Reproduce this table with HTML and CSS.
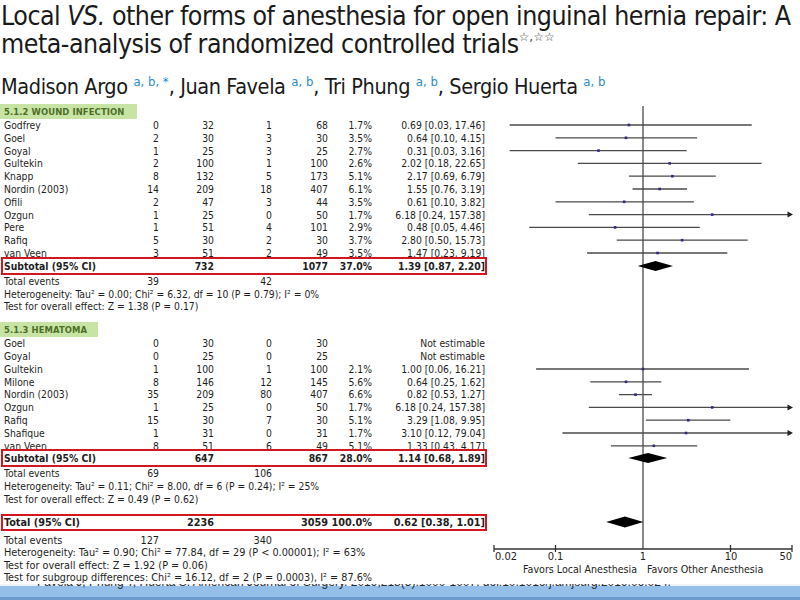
FILE: index.html
```html
<!DOCTYPE html>
<html lang="en">
<head>
<meta charset="utf-8">
<title>Local vs other anesthesia forest plot</title>
<link rel="stylesheet" href="styles.css">
</head>
<body>
<div class="page">
  <header class="head">
    <h1 class="title">
      <span class="tline">Local <i>VS.</i> other forms of anesthesia for open inguinal hernia repair: A</span>
      <span class="tline">meta-analysis of randomized controlled trials<sup class="stars">☆,☆☆</sup></span>
    </h1>
    <p class="authors">Madison Argo <sup class="aff">a, b, *</sup>, Juan Favela <sup class="aff">a, b</sup>, Tri Phung <sup class="aff">a, b</sup>, Sergio Huerta <sup class="aff">a, b</sup></p>
  </header>

  <div class="figure">
    <div class="table">
      <div class="group g1">5.1.2 WOUND INFECTION</div>
      <div class="row"><span class="nm">Godfrey</span><span>0</span><span>32</span><span>1</span><span>68</span><span>1.7%</span><span>0.69 [0.03, 17.46]</span></div>
      <div class="row"><span class="nm">Goel</span><span>2</span><span>30</span><span>3</span><span>30</span><span>3.5%</span><span>0.64 [0.10, 4.15]</span></div>
      <div class="row"><span class="nm">Goyal</span><span>1</span><span>25</span><span>3</span><span>25</span><span>2.7%</span><span>0.31 [0.03, 3.16]</span></div>
      <div class="row"><span class="nm">Gultekin</span><span>2</span><span>100</span><span>1</span><span>100</span><span>2.6%</span><span>2.02 [0.18, 22.65]</span></div>
      <div class="row"><span class="nm">Knapp</span><span>8</span><span>132</span><span>5</span><span>173</span><span>5.1%</span><span>2.17 [0.69, 6.79]</span></div>
      <div class="row"><span class="nm">Nordin (2003)</span><span>14</span><span>209</span><span>18</span><span>407</span><span>6.1%</span><span>1.55 [0.76, 3.19]</span></div>
      <div class="row"><span class="nm">Ofili</span><span>2</span><span>47</span><span>3</span><span>44</span><span>3.5%</span><span>0.61 [0.10, 3.82]</span></div>
      <div class="row"><span class="nm">Ozgun</span><span>1</span><span>25</span><span>0</span><span>50</span><span>1.7%</span><span>6.18 [0.24, 157.38]</span></div>
      <div class="row"><span class="nm">Pere</span><span>1</span><span>51</span><span>4</span><span>101</span><span>2.9%</span><span>0.48 [0.05, 4.46]</span></div>
      <div class="row"><span class="nm">Rafiq</span><span>5</span><span>30</span><span>2</span><span>30</span><span>3.7%</span><span>2.80 [0.50, 15.73]</span></div>
      <div class="row"><span class="nm">van Veen</span><span>3</span><span>51</span><span>2</span><span>49</span><span>3.5%</span><span>1.47 [0.23, 9.19]</span></div>
      <div class="row boxed bold sub1"><span class="nm">Subtotal (95% CI)</span><span></span><span>732</span><span></span><span>1077</span><span>37.0%</span><span>1.39 [0.87, 2.20]</span></div>
      <div class="row"><span class="nm">Total events</span><span>39</span><span></span><span>42</span><span></span><span></span><span></span></div>
      <div class="line">Heterogeneity: Tau² = 0.00; Chi² = 6.32, df = 10 (P = 0.79); I² = 0%</div>
      <div class="line">Test for overall effect: Z = 1.38 (P = 0.17)</div>

      <div class="group g2">5.1.3 HEMATOMA</div>
      <div class="row"><span class="nm">Goel</span><span>0</span><span>30</span><span>0</span><span>30</span><span></span><span>Not estimable</span></div>
      <div class="row"><span class="nm">Goyal</span><span>0</span><span>25</span><span>0</span><span>25</span><span></span><span>Not estimable</span></div>
      <div class="row"><span class="nm">Gultekin</span><span>1</span><span>100</span><span>1</span><span>100</span><span>2.1%</span><span>1.00 [0.06, 16.21]</span></div>
      <div class="row"><span class="nm">Milone</span><span>8</span><span>146</span><span>12</span><span>145</span><span>5.6%</span><span>0.64 [0.25, 1.62]</span></div>
      <div class="row"><span class="nm">Nordin (2003)</span><span>35</span><span>209</span><span>80</span><span>407</span><span>6.6%</span><span>0.82 [0.53, 1.27]</span></div>
      <div class="row"><span class="nm">Ozgun</span><span>1</span><span>25</span><span>0</span><span>50</span><span>1.7%</span><span>6.18 [0.24, 157.38]</span></div>
      <div class="row"><span class="nm">Rafiq</span><span>15</span><span>30</span><span>7</span><span>30</span><span>5.1%</span><span>3.29 [1.08, 9.95]</span></div>
      <div class="row"><span class="nm">Shafique</span><span>1</span><span>31</span><span>0</span><span>31</span><span>1.7%</span><span>3.10 [0.12, 79.04]</span></div>
      <div class="row"><span class="nm">van Veen</span><span>8</span><span>51</span><span>6</span><span>49</span><span>5.1%</span><span>1.33 [0.43, 4.17]</span></div>
      <div class="row boxed bold sub2"><span class="nm">Subtotal (95% CI)</span><span></span><span>647</span><span></span><span>867</span><span>28.0%</span><span>1.14 [0.68, 1.89]</span></div>
      <div class="row"><span class="nm">Total events</span><span>69</span><span></span><span>106</span><span></span><span></span><span></span></div>
      <div class="line">Heterogeneity: Tau² = 0.11; Chi² = 8.00, df = 6 (P = 0.24); I² = 25%</div>
      <div class="line">Test for overall effect: Z = 0.49 (P = 0.62)</div>

      <div class="row boxed bold total narrow"><span class="nm">Total (95% CI)</span><span></span><span>2236</span><span></span><span>3059</span><span>100.0%</span><span>0.62 [0.38, 1.01]</span></div>
      <div class="foot">
        <div class="row narrow"><span class="nm">Total events</span><span>127</span><span></span><span>340</span><span></span><span></span><span></span></div>
        <div class="line narrow">Heterogeneity: Tau² = 0.90; Chi² = 77.84, df = 29 (P &lt; 0.00001); I² = 63%</div>
        <div class="line narrow">Test for overall effect: Z = 1.92 (P = 0.06)</div>
        <div class="line narrow">Test for subgroup differences: Chi² = 16.12, df = 2 (P = 0.0003), I² = 87.6%</div>
      </div>
    </div>

    <svg class="plot" viewBox="490 100 310 484" width="310" height="484" xmlns="http://www.w3.org/2000/svg">
      <g class="ci">
        <line x1="643" y1="106" x2="643" y2="549"/>
        <line x1="509.7" y1="125" x2="751.7" y2="125"/>
        <line x1="555.5" y1="137.8" x2="697.1" y2="137.8"/>
        <line x1="509.7" y1="150.6" x2="686.7" y2="150.6"/>
        <line x1="577.8" y1="163.4" x2="761.6" y2="163.4"/>
        <line x1="628.9" y1="176.2" x2="715.8" y2="176.2"/>
        <line x1="632.6" y1="189" x2="687.1" y2="189"/>
        <line x1="555.5" y1="201.8" x2="693.9" y2="201.8"/>
        <line x1="588.8" y1="214.6" x2="789" y2="214.6"/>
        <line x1="529.2" y1="227.4" x2="699.8" y2="227.4"/>
        <line x1="616.7" y1="240.2" x2="747.7" y2="240.2"/>
        <line x1="587.1" y1="253" x2="727.3" y2="253"/>
        <line x1="536.1" y1="369" x2="748.9" y2="369"/>
        <line x1="590.3" y1="381.8" x2="661.3" y2="381.8"/>
        <line x1="618.9" y1="394.6" x2="652.1" y2="394.6"/>
        <line x1="588.8" y1="407.4" x2="789" y2="407.4"/>
        <line x1="645.9" y1="420.2" x2="730.3" y2="420.2"/>
        <line x1="562.4" y1="433" x2="789" y2="433"/>
        <line x1="610.9" y1="445.8" x2="697.3" y2="445.8"/>
        <line class="axis" x1="494" y1="549" x2="792" y2="549"/>
        <line class="axis" x1="494" y1="545" x2="494" y2="552"/>
        <line class="axis" x1="555.5" y1="545" x2="555.5" y2="552"/>
        <line class="axis" x1="730.5" y1="545" x2="730.5" y2="552"/>
        <line class="axis" x1="792" y1="545" x2="792" y2="552"/>
      </g>
      <g class="arrows">
        <polygon points="787.5,211.6 793,214.6 787.5,217.6"/>
        <polygon points="787.5,404.4 793,407.4 787.5,410.4"/>
        <polygon points="787.5,430 793,433 787.5,436"/>
      </g>
      <g class="dots">
        <rect x="627.6" y="123.7" width="2.6" height="2.6"/>
        <rect x="624.7" y="136.5" width="2.6" height="2.6"/>
        <rect x="597.2" y="149.3" width="2.6" height="2.6"/>
        <rect x="668.4" y="162.1" width="2.6" height="2.6"/>
        <rect x="671.1" y="174.9" width="2.6" height="2.6"/>
        <rect x="658.4" y="187.7" width="2.6" height="2.6"/>
        <rect x="622.9" y="200.5" width="2.6" height="2.6"/>
        <rect x="710.9" y="213.3" width="2.6" height="2.6"/>
        <rect x="613.8" y="226.1" width="2.6" height="2.6"/>
        <rect x="680.8" y="238.9" width="2.6" height="2.6"/>
        <rect x="656.3" y="251.7" width="2.6" height="2.6"/>
        <rect x="641.7" y="367.7" width="2.6" height="2.6"/>
        <rect x="624.7" y="380.5" width="2.6" height="2.6"/>
        <rect x="634.2" y="393.3" width="2.6" height="2.6"/>
        <rect x="710.9" y="406.1" width="2.6" height="2.6"/>
        <rect x="687" y="418.9" width="2.6" height="2.6"/>
        <rect x="684.7" y="431.7" width="2.6" height="2.6"/>
        <rect x="652.5" y="444.5" width="2.6" height="2.6"/>
      </g>
      <g class="diamonds">
        <polygon points="637.7,266 655.5,261 673,266 655.5,271"/>
        <polygon points="628.3,458 648,453 667.2,458 648,463"/>
        <polygon points="606.2,522 624.8,516.6 643.4,522 624.8,527.4"/>
      </g>
      <g class="ticks">
        <text x="495" y="560" text-anchor="start">0.02</text>
        <text x="555.5" y="560" text-anchor="middle">0.1</text>
        <text x="643" y="560" text-anchor="middle">1</text>
        <text x="731" y="560" text-anchor="middle">10</text>
        <text x="792" y="560" text-anchor="end">50</text>
        <text class="fav" x="637" y="573" text-anchor="end">Favors Local Anesthesia</text>
        <text class="fav" x="647" y="573" text-anchor="start">Favors Other Anesthesia</text>
      </g>
    </svg>
  </div>

  <footer class="cite">
    <span class="cite-text">Favela J, Phung T, Huerta S. American Journal of Surgery. 2019;218(5):1000-1007. doi:10.1016/j.amjsurg.2019.06.024.</span>
  </footer>
</div>
</body>
</html>
```

FILE: styles.css
```css
* { box-sizing: border-box; }
html, body { margin: 0; padding: 0; background: #fff; }
.page {
  width: 800px;
  height: 600px;
  overflow: hidden;
  display: flex;
  flex-direction: column;
  background: #fff;
  color: #1c1c1c;
}
.head { padding: 2px 0 0 1px; }
.title {
  margin: 0;
  font-family: "DejaVu Sans", sans-serif;
  font-stretch: condensed;
  font-weight: normal;
  font-size: 26.5px;
  letter-spacing: -0.5px;
  line-height: 28px;
  color: #1a1a1a;
}
.tline { display: block; white-space: nowrap; }
.stars {
  font-family: "DejaVu Sans", sans-serif;
  font-stretch: normal;
  letter-spacing: 0;
  font-size: 12px;
  color: #444;
  vertical-align: 12px;
  line-height: 0;
}
.authors {
  margin: 18px 0 0 0;
  font-family: "DejaVu Sans", sans-serif;
  font-stretch: condensed;
  font-size: 21.5px;
  letter-spacing: -0.4px;
  line-height: 22px;
  height: 22px;
  white-space: nowrap;
  color: #1a1a1a;
}
.aff {
  font-size: 13px;
  letter-spacing: 0;
  color: #2f8bc6;
  vertical-align: 8px;
  line-height: 0;
}
.figure {
  display: flex;
  align-items: flex-start;
  height: 484px;
  margin-top: 2px;
}
.table {
  width: 490px;
  font-family: "DejaVu Sans", sans-serif;
  font-stretch: condensed;
  font-size: 10.3px;
  color: #1e1e1e;
}
.group {
  display: inline-block;
  height: 15px;
  line-height: 15px;
  padding: 0 10px 0 4px;
  background: #c8e4a4;
  color: #4c6e28;
  font-weight: bold;
  font-size: 9.4px;
  letter-spacing: 0.1px;
}
.g1 { margin-top: 4px; width: 137px; }
.g2 { margin-top: 9px; width: 98px; }
.row {
  display: grid;
  grid-template-columns: 120px 35px 55px 58px 56px 44px 113px;
  width: 485px;
  padding-left: 4px;
  height: 12.8px;
  line-height: 12.8px;
  white-space: nowrap;
}
.row span { text-align: right; }
.row .nm { text-align: left; }
.line {
  height: 12.8px;
  line-height: 12.8px;
  padding-left: 4px;
  white-space: nowrap;
}
.boxed {
  position: relative;
  margin-left: 1px;
  width: 486px;
  height: 18px;
  line-height: 14px;
  padding-left: 1px;
  border: 2px solid #d4161e;
  background: #fff;
}
.bold { font-weight: bold; }
.sub1 { margin-top: -3px; }
.sub2 { margin-top: -3px; }
.total { margin-top: 8px; height: 17px; line-height: 13px; }
.narrow {
  font-family: "DejaVu Sans", sans-serif;
  font-stretch: condensed;
  font-size: 10.8px;
}
.foot { margin-top: 4px; }
.foot .row, .foot .line { height: 12.4px; line-height: 12.4px; }
.plot { display: block; flex: none; }
.ci line { stroke: #4a4a4a; stroke-width: 1.3; }
.ci line.axis { stroke: #333; stroke-width: 1.3; }
.arrows polygon { fill: #222; }
.dots rect { fill: #2b2b86; }
.diamonds polygon { fill: #000; }
.ticks text {
  font-family: "DejaVu Sans", sans-serif;
  font-stretch: condensed;
  font-size: 11px;
  fill: #222;
}
.ticks text.fav { font-size: 10.6px; }
.cite {
  flex: none;
  height: 16px;
  overflow: hidden;
  background: linear-gradient(to bottom, #eef4fa 0, #eef4fa 2px, #93bfe8 2px, #93bfe8 13px, #6c9ccb 13px, #6c9ccb 16px);
  font-family: "Liberation Sans", sans-serif;
  font-size: 12px;
  color: #2a2a2a;
  white-space: nowrap;
}
.cite-text {
  display: block;
  margin-top: -9px;
  line-height: 14px;
  padding-left: 37px;
}
```
